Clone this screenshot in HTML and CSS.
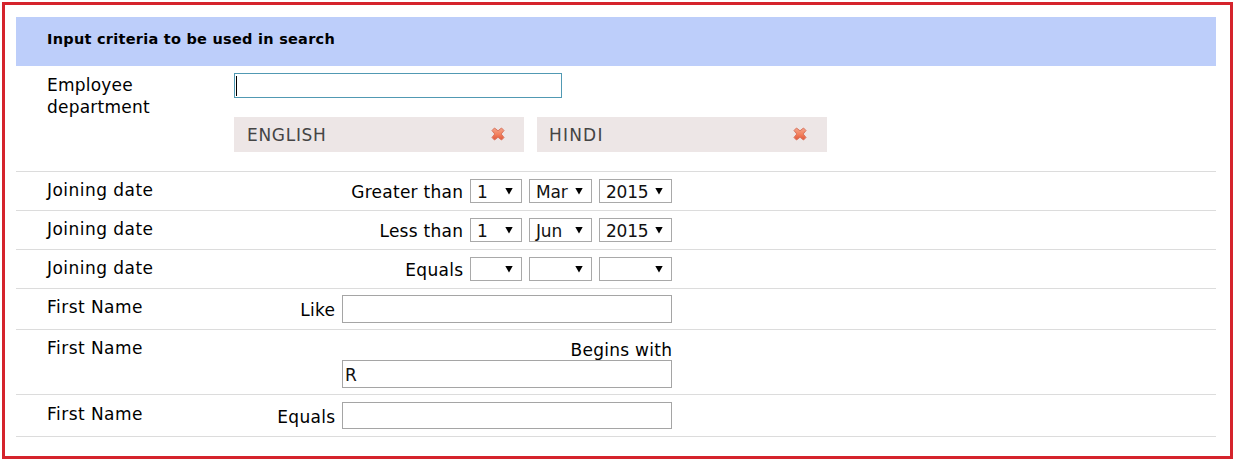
FILE: index.html
```html
<!DOCTYPE html>
<html lang="en">
<head>
<meta charset="utf-8">
<title>Search criteria</title>
<link rel="stylesheet" href="styles.css">
</head>
<body>
<svg class="defs" width="0" height="0" aria-hidden="true">
  <defs>
    <linearGradient id="cross" x1="0" y1="0" x2="0" y2="1">
      <stop offset="0" stop-color="#f3a58d"/>
      <stop offset=".5" stop-color="#f4835f"/>
      <stop offset="1" stop-color="#e0573b"/>
    </linearGradient>
    <symbol id="remove" viewBox="0 0 14 14">
      <path d="M3.500 1 L7 3.800 L10.500 1 L13 3.500 L10.200 7 L13 10.500 L10.500 13 L7 10.200 L3.500 13 L1 10.500 L3.800 7 L1 3.500 Z" fill="url(#cross)" stroke="#d9755f" stroke-width="1" stroke-linejoin="round"/>
    </symbol>
  </defs>
</svg>
<main class="panel">
  <h1 class="heading">Input criteria to be used in search</h1>
  <section class="row row-dept">
    <div class="label">Employee<br>department</div>
    <div class="dept">
      <div class="search"><span class="caret"></span></div>
      <div class="tags">
        <div class="tag"><span>ENGLISH</span><svg class="remove"><use href="#remove"/></svg></div>
        <div class="tag tag-wide"><span>HINDI</span><svg class="remove"><use href="#remove"/></svg></div>
      </div>
    </div>
  </section>
  <section class="row row-date">
    <div class="label name">Joining date</div>
    <div class="fields"><span class="op">Greater than</span>
      <div class="select day"><span>1</span><i class="arrow"></i></div>
      <div class="select month"><span>Mar</span><i class="arrow"></i></div>
      <div class="select year"><span>2015</span><i class="arrow"></i></div>
    </div>
  </section>
  <section class="row row-date">
    <div class="label name">Joining date</div>
    <div class="fields"><span class="op">Less than</span>
      <div class="select day"><span>1</span><i class="arrow"></i></div>
      <div class="select month"><span>Jun</span><i class="arrow"></i></div>
      <div class="select year"><span>2015</span><i class="arrow"></i></div>
    </div>
  </section>
  <section class="row row-date">
    <div class="label name">Joining date</div>
    <div class="fields"><span class="op">Equals</span>
      <div class="select day"><i class="arrow"></i></div>
      <div class="select month"><i class="arrow"></i></div>
      <div class="select year"><i class="arrow"></i></div>
    </div>
  </section>
  <section class="row row-like">
    <div class="label name">First Name</div>
    <div class="fields"><span class="op">Like</span><div class="input"></div></div>
  </section>
  <section class="row row-begins">
    <div class="label name">First Name</div>
    <div class="fields stacked"><span class="op">Begins with</span><div class="input">R</div></div>
  </section>
  <section class="row row-equals">
    <div class="label name">First Name</div>
    <div class="fields"><span class="op">Equals</span><div class="input short"></div></div>
  </section>
</main>
</body>
</html>
```
FILE: styles.css
```css
* { box-sizing: border-box; }
body {
  margin: 0;
  padding: 2px 2px 0;
  height: 460px;
  overflow: hidden;
  background: #fff;
  color: #000;
  font: 17px/22px "DejaVu Sans", sans-serif;
}
.defs { position: absolute; }
.panel {
  height: 457px;
  border: 3px solid #d5232c;
  padding: 12px 14px 0 11px;
}
.heading {
  height: 49px;
  margin: 0;
  padding: 11px 31px 0;
  background: #bdcefa;
  font-size: 14.5px;
  line-height: 22px;
  letter-spacing: .26px;
}
.row {
  display: grid;
  grid-template-columns: 187px 438px;
  align-items: start;
  padding-left: 31px;
  border-bottom: 1px solid #dcdcdc;
}
.row-dept { height: 106px; padding-top: 7px; }
.row-date { height: 39px; padding-top: 7px; }
.row-like { height: 41px; padding-top: 6px; }
.row-begins { height: 65px; padding-top: 7px; }
.row-equals { height: 42px; padding-top: 7px; }
.label { white-space: nowrap; letter-spacing: .22px; }
.name { letter-spacing: .46px; }
.row-dept .label, .row-like .label, .row-equals .label { padding-top: 1px; }
.dept { display: flex; flex-direction: column; gap: 19px; }
.search {
  width: 328px;
  height: 25px;
  padding: 2px 1px;
  border: 1px solid #5199b3;
}
.caret { display: block; width: 1px; height: 20px; background: #000; }
.tags { display: flex; gap: 13px; }
.tag {
  display: flex;
  flex: none;
  justify-content: space-between;
  align-items: center;
  width: 290px;
  height: 35px;
  padding: 0 19px 0 13px;
  background: #ede6e6;
  color: #444;
  letter-spacing: .7px;
}
.tag-wide { padding: 0 20px 0 12px; letter-spacing: 1.2px; }
.remove { width: 14px; height: 14px; margin-bottom: 1px; }
.fields {
  display: flex;
  justify-content: flex-end;
  gap: 7px;
  white-space: nowrap;
}
.op { padding-top: 2px; letter-spacing: .27px; margin-right: -.27px; }
.stacked { flex-direction: column; align-items: flex-end; gap: 0; }
.select {
  display: flex;
  justify-content: space-between;
  align-items: center;
  height: 24px;
  padding: 2px 8px 0 6px;
  border: 1px solid #a9a9a9;
  color: #111;
  letter-spacing: -.2px;
}
.day { width: 52px; }
.month { width: 63px; }
.year { width: 73px; }
.arrow {
  width: 8px;
  height: 7px;
  margin: 0 0 2px auto;
  background: #000;
  clip-path: polygon(0 0, 100% 0, 50% 100%);
}
.input {
  width: 330px;
  height: 28px;
  padding: 3px 2px 0;
  border: 1px solid #a5a5a5;
  color: #111;
}
.short { height: 27px; }
.row-like .op, .row-equals .op { padding-top: 4px; }
.stacked .op { padding-top: 2px; height: 23px; }
```
